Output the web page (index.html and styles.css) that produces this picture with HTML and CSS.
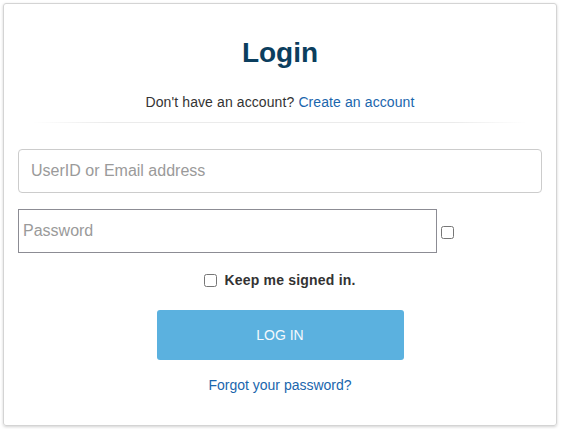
FILE: index.html
```html
<!DOCTYPE html>
<html lang="en">
<head>
  <meta charset="UTF-8" />
  <title>Login</title>
  <link rel="stylesheet" href="styles.css">
</head>
<body>

  <section class="login-card">
    <h1 class="login-title">Login</h1>
    <p class="signup-line">Don't have an account? <a href="#" class="link">Create an account</a></p>
    <hr class="divider" />

    <form class="login-form">
      <input type="text" class="field field-user" placeholder="UserID or Email address" />
      <div class="pass-row">
        <input type="password" class="field field-pass" placeholder="Password" />
        <input type="checkbox" class="check show-pass" />
      </div>
      <label class="keep-signed">
        <input type="checkbox" class="check" />
        <span>Keep me signed in.</span>
      </label>
      <button type="button" class="login-btn">Log in</button>
      <a href="#" class="link forgot">Forgot your password?</a>
    </form>
  </section>

</body>
</html>
```

FILE: styles.css
```css
/* Base */
*, *::before, *::after { box-sizing: border-box; }
body {
  margin: 0;
  padding: 3px;
  font-family: "Liberation Sans", Arial, sans-serif;
  background: #fff;
  color: #333;
}

/* Card */
.login-card {
  width: 554px;
  height: 423px;
  border: 1px solid #d4d4d4;
  border-radius: 3px;
  box-shadow: 0 1px 3px rgba(0,0,0,0.18);
  padding: 0 14px;
}
.login-title {
  margin: 31px 0 0;
  font-size: 28px;
  line-height: 36px;
  font-weight: bold;
  color: #0b3e5e;
  text-align: center;
}
.signup-line {
  margin: 21px 0 0;
  font-size: 14px;
  line-height: 20px;
  text-align: center;
  color: #333;
  letter-spacing: 0.1px;
}
.link {
  color: #1a66ad;
  text-decoration: none;
}
.divider {
  margin: 10px 14px 0;
  height: 1px;
  border: 0;
  background: linear-gradient(to right, rgba(0,0,0,0), rgba(0,0,0,0.08) 15%, rgba(0,0,0,0.08) 85%, rgba(0,0,0,0));
}

/* Form */
.login-form {
  display: flex;
  flex-direction: column;
  margin-top: 26px;
}
.field {
  font-family: inherit;
  font-size: 16px;
  color: #333;
  height: 44px;
  background: #fff;
  outline: none;
}
.field::placeholder { color: #9a9a9a; }
.field-user {
  width: 524px;
  border: 1px solid #ccc;
  border-radius: 4px;
  padding: 0 12px;
}
.pass-row {
  display: flex;
  align-items: center;
  margin-top: 16px;
}
.field-pass {
  width: 419px;
  border: 1px solid #8c8c94;
  border-radius: 0;
  padding: 0 4px;
}
.check {
  width: 13px;
  height: 13px;
  margin: 0;
}
.show-pass { margin-left: 4px; margin-top: 2px; }

.keep-signed {
  display: flex;
  align-items: center;
  justify-content: center;
  gap: 7px;
  margin-top: 19px;
  font-size: 14px;
  font-weight: bold;
  color: #333;
  letter-spacing: 0.2px;
}

.login-btn {
  align-self: center;
  width: 247px;
  height: 50px;
  margin-top: 22px;
  border: 0;
  border-radius: 3px;
  background: #5bb1df;
  color: #f4f9fc;
  font-family: inherit;
  font-size: 14px;
  text-transform: uppercase;
}
.forgot {
  align-self: center;
  margin-top: 15px;
  font-size: 14px;
  line-height: 20px;
}
```
